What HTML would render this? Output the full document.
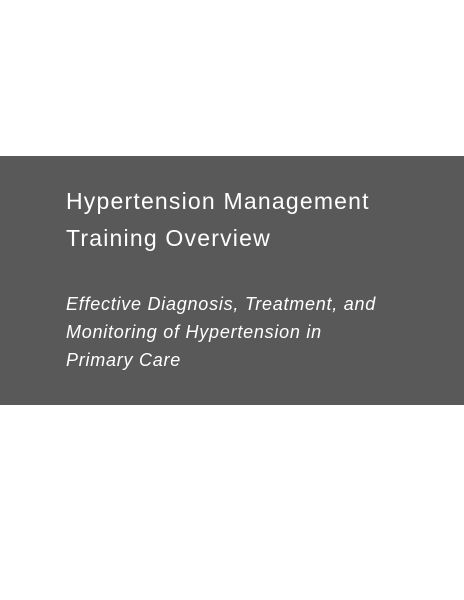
<!DOCTYPE html>
<html><head><meta charset="utf-8"><style>
body{margin:0;width:464px;height:600px;background:#fff;position:relative;overflow:hidden;font-family:"Liberation Sans",sans-serif}
.band{position:absolute;left:0;top:156px;width:464px;height:249px;background:#595959}
.t{position:absolute;left:66px;color:#fff;font-size:23px;letter-spacing:1.2px;white-space:nowrap;line-height:26px}
.s{position:absolute;left:66px;color:#fff;font-size:18px;letter-spacing:0.75px;font-style:italic;white-space:nowrap;line-height:20px}
</style></head><body>
<div class="band"></div>
<div class="t" style="top:188px">Hypertension Management</div>
<div class="t" style="top:225px">Training Overview</div>
<div class="s" style="top:294px">Effective Diagnosis, Treatment, and</div>
<div class="s" style="top:322px">Monitoring of Hypertension in</div>
<div class="s" style="top:350px">Primary Care</div>
</body></html>
